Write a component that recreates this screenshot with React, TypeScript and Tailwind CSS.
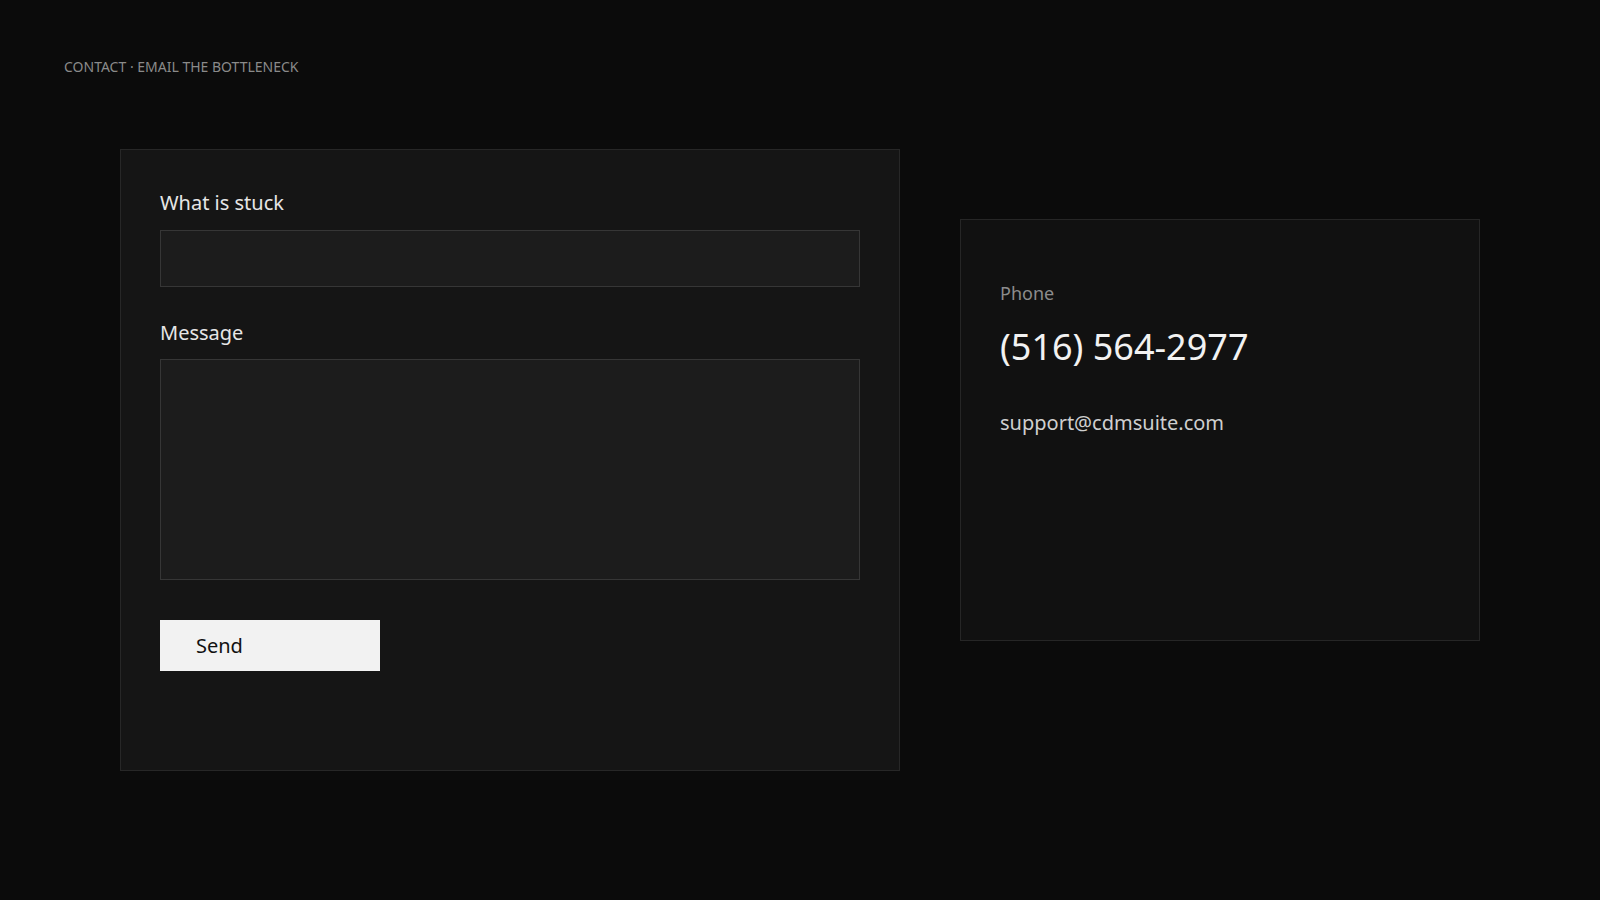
export default function App() {
  return (
    <div
      className="min-h-[900px] w-full bg-[#0b0b0b] px-[64px] pt-[57px]"
      style={{ fontFamily: '"Noto Sans", "Open Sans", sans-serif' }}
    >
      <div className="text-[14px] leading-[20px] text-[#8a8a8a]">
        CONTACT · EMAIL THE BOTTLENECK
      </div>

      <div className="mx-[56px] mt-[72px] grid grid-cols-[780px_520px] gap-[60px]">
        <form
          className="flex h-[622px] flex-col border border-[#272727] bg-[#151515] px-[39px] pt-[38px]"
          onSubmit={(e) => e.preventDefault()}
        >
          <label className="mb-3 block text-[20px] leading-[30px] text-[#e6e6e6]">
            What is stuck
          </label>
          <input
            type="text"
            className="h-[57px] w-full border border-[#363636] bg-[#1c1c1c] px-4 text-[18px] text-[#e6e6e6] outline-none"
          />

          <label className="mt-[31px] mb-[11px] block text-[20px] leading-[30px] text-[#e6e6e6]">
            Message
          </label>
          <textarea className="h-[221px] w-full resize-none border border-[#363636] bg-[#1c1c1c] px-4 py-3 text-[18px] text-[#e6e6e6] outline-none" />

          <button
            type="submit"
            className="mt-[40px] flex h-[51px] w-[220px] items-center bg-[#f2f2f2] pl-[36px] text-[20px] text-[#111111]"
          >
            Send
          </button>
        </form>

        <div className="mt-[70px] h-[422px] border border-[#262626] bg-[#111111] px-[39px] pt-[60px]">
          <div className="text-[18px] leading-[27px] text-[#8c8c8c]">Phone</div>
          <div className="mt-[18px] text-[36px] leading-[43px] text-[#f2f2f2]">
            (516) 564-2977
          </div>
          <div className="mt-[40px] text-[20px] leading-[30px] text-[#cfcfcf]">
            support@cdmsuite.com
          </div>
        </div>
      </div>
    </div>
  );
}
